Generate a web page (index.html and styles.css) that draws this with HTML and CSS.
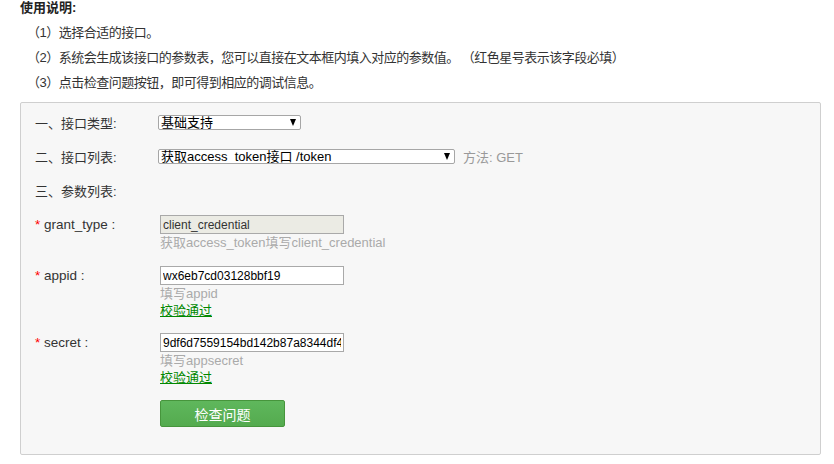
FILE: index.html
```html
<!DOCTYPE html>
<html lang="zh-CN">
<head>
    <meta charset="UTF-8">
    <title>接口调试工具</title>
    <link rel="stylesheet" href="styles.css">
</head>
<body>
    <div class="guide">
        <h3>使用说明:</h3>
        <ul>
            <li>（1）选择合适的接口。</li>
            <li>（2）系统会生成该接口的参数表，您可以直接在文本框内填入对应的参数值。 （红色星号表示该字段必填）</li>
            <li>（3）点击检查问题按钮，即可得到相应的调试信息。</li>
        </ul>
    </div>

    <div class="panel">
        <div class="row">
            <label class="row-label">一、接口类型:</label>
            <span class="select-wrap type-select">
                <select>
                    <option>基础支持</option>
                </select>
            </span>
        </div>
        <div class="row">
            <label class="row-label">二、接口列表:</label>
            <span class="select-wrap api-select">
                <select>
                    <option>获取access_token接口 /token</option>
                </select>
            </span>
            <span class="method">方法: GET</span>
        </div>
        <div class="row">
            <label class="row-label">三、参数列表:</label>
        </div>

        <div class="field">
            <label class="field-label"><span class="req">*</span> grant_type :</label>
            <div class="field-body">
                <input type="text" value="client_credential" disabled>
                <div class="hint">获取access_token填写client_credential</div>
            </div>
        </div>
        <div class="field">
            <label class="field-label"><span class="req">*</span> appid :</label>
            <div class="field-body">
                <input type="text" value="wx6eb7cd03128bbf19">
                <div class="hint">填写appid</div>
                <a class="ok" href="#">校验通过</a>
            </div>
        </div>
        <div class="field">
            <label class="field-label"><span class="req">*</span> secret :</label>
            <div class="field-body">
                <input type="text" value="9df6d7559154bd142b87a8344df4">
                <div class="hint">填写appsecret</div>
                <a class="ok" href="#">校验通过</a>
            </div>
        </div>

        <div class="actions">
            <button class="btn-check">检查问题</button>
        </div>
    </div>
</body>
</html>
```

FILE: styles.css
```css
body {
    margin: 0;
    padding: 0;
    font-family: "Liberation Sans", Arial, "Noto Sans CJK SC", sans-serif;
    font-size: 13px;
    color: #333;
    background: #fff;
}

.guide {
    padding: 0 20px;
}

.guide h3 {
    margin: 0;
    font-size: 13px;
    line-height: 16px;
    font-weight: bold;
    color: #222;
}

.guide ul {
    list-style: none;
    margin: 4px 0 0;
    padding: 0 0 0 7px;
}

.guide li {
    line-height: 25px;
    letter-spacing: -0.5px;
}

.panel {
    margin: 7px 13px 0 20px;
    padding: 7px 14px 27px;
    background: #f7f7f7;
    border: 1px solid #cfcfcf;
    border-radius: 2px;
}

.row {
    display: flex;
    align-items: center;
    height: 24px;
    margin-bottom: 10px;
}

.row-label {
    width: 123px;
    flex-shrink: 0;
}

.select-wrap {
    position: relative;
    display: inline-block;
}

.select-wrap select {
    appearance: none;
    -webkit-appearance: none;
    display: block;
    height: 15px;
    padding: 0 0 0 2px;
    margin: 0;
    font-family: "Liberation Sans", Arial, "Noto Sans CJK SC", sans-serif;
    font-size: 13px;
    line-height: 13px;
    color: #000;
    background: #fff;
    border: 1px solid #a6a6a6;
    border-radius: 2px;
}

/* seta do select */
.select-wrap::after {
    content: "";
    position: absolute;
    right: 5px;
    top: 4px;
    border-left: 3.5px solid transparent;
    border-right: 3.5px solid transparent;
    border-top: 7px solid #000;
    pointer-events: none;
}

.type-select select {
    width: 143px;
}

.api-select select {
    width: 297px;
}

.method {
    margin-left: 8px;
    color: #999;
}

.field {
    display: flex;
    margin-bottom: 14px;
}

/* margens colapsam com a .row de cima */
.row + .field {
    margin-top: 13px;
}

.field-label {
    width: 125px;
    flex-shrink: 0;
    line-height: 19px;
    font-size: 13.5px;
}

.req {
    color: #f00;
}

.field-body input {
    display: block;
    box-sizing: border-box;
    width: 184px;
    height: 19px;
    margin: 0;
    padding: 0 2px;
    font-family: "Liberation Sans", Arial, sans-serif;
    font-size: 12px;
    color: #000;
    background: #fff;
    border: 1px solid #a9a9a9;
}

.field-body input:disabled {
    background: #ebebe4;
    color: #333;
}

.hint {
    color: #aaa;
    line-height: 18px;
}

.ok {
    display: block;
    color: #080;
    line-height: 16px;
    text-decoration: underline;
}

.actions {
    padding-left: 125px;
    margin-top: 1px;
}

.btn-check {
    display: block;
    width: 125px;
    height: 27px;
    font-family: "Liberation Sans", Arial, "Noto Sans CJK SC", sans-serif;
    font-size: 14px;
    color: #fff;
    background: linear-gradient(#5fb75c, #54ab4f);
    border: 1px solid #46953c;
    border-radius: 2px;
    cursor: pointer;
}
```
